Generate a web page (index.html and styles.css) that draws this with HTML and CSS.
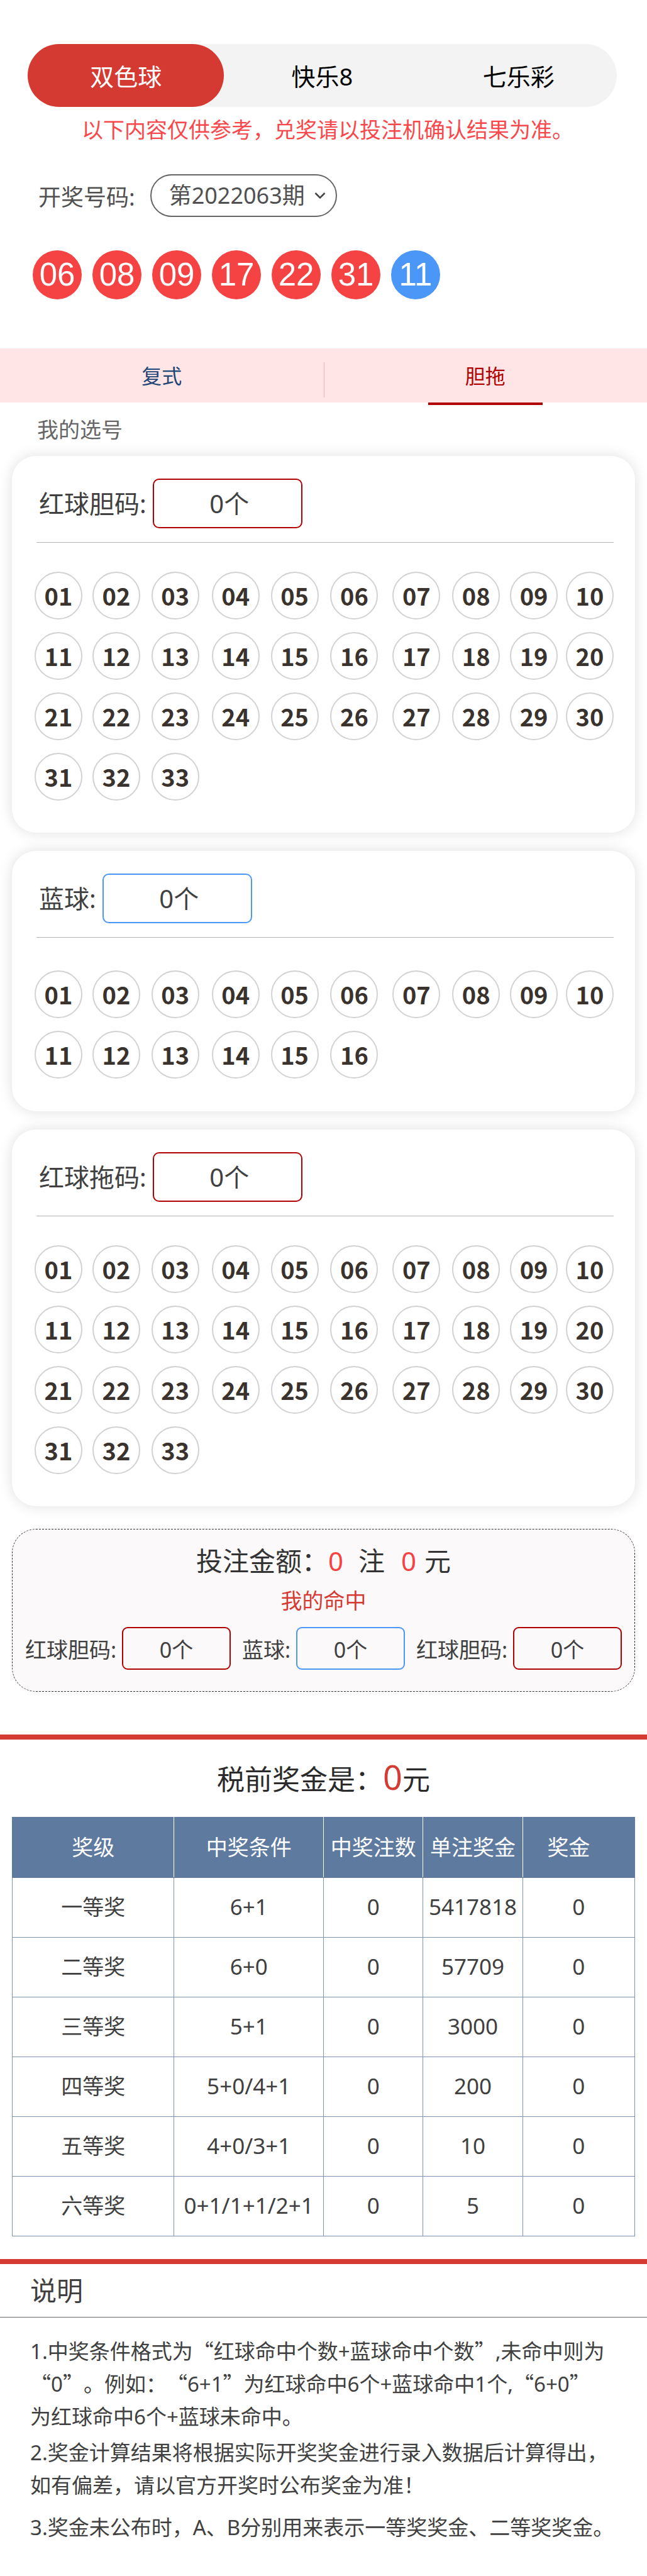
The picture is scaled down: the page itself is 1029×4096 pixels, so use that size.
FILE: index.html
```
<!DOCTYPE html>
<html lang="zh-CN">
<head>
<meta charset="utf-8">
<meta name="viewport" content="width=device-width, initial-scale=1">
<title>双色球 胆拖</title>
<link rel="stylesheet" href="styles.css">
</head>
<body>
<header class="top">
  <nav class="games">
    <button class="game game-active" type="button">双色球</button>
    <button class="game" type="button">快乐8</button>
    <button class="game" type="button">七乐彩</button>
  </nav>
  <p class="notice">以下内容仅供参考，兑奖请以投注机确认结果为准。</p>
  <div class="draw">
    <label for="issue">开奖号码:</label>
    <div class="issue">
      <select id="issue"><option>第2022063期</option></select>
      <svg class="chevron" viewBox="0 0 18 12" aria-hidden="true"><path d="M1.500 2 9 9.500 16.500 2" fill="none" stroke="#444" stroke-width="2.500"/></svg>
    </div>
  </div>
  <div class="result">
    <span class="ball">06</span><span class="ball">08</span><span class="ball">09</span><span class="ball">17</span><span class="ball">22</span><span class="ball">31</span><span class="ball ball-blue">11</span>
  </div>
</header>

<nav class="modes">
  <button class="mode" type="button">复式</button>
  <button class="mode mode-active" type="button">胆拖</button>
</nav>

<main>
  <h2 class="picks-title">我的选号</h2>
  <div class="cards">
    <section class="card">
      <div class="card-head">
        <label for="dan">红球胆码:</label>
        <input class="count" id="dan" type="text" value="0个" readonly>
      </div>
      <div class="numbers">
        <button type="button">01</button><button type="button">02</button><button type="button">03</button><button type="button">04</button><button type="button">05</button><button type="button">06</button><button type="button">07</button><button type="button">08</button><button type="button">09</button><button type="button">10</button>
        <button type="button">11</button><button type="button">12</button><button type="button">13</button><button type="button">14</button><button type="button">15</button><button type="button">16</button><button type="button">17</button><button type="button">18</button><button type="button">19</button><button type="button">20</button>
        <button type="button">21</button><button type="button">22</button><button type="button">23</button><button type="button">24</button><button type="button">25</button><button type="button">26</button><button type="button">27</button><button type="button">28</button><button type="button">29</button><button type="button">30</button>
        <button type="button">31</button><button type="button">32</button><button type="button">33</button>
      </div>
    </section>

    <section class="card card-blue">
      <div class="card-head">
        <label for="blue">蓝球:</label>
        <input class="count count-blue" id="blue" type="text" value="0个" readonly>
      </div>
      <div class="numbers">
        <button type="button">01</button><button type="button">02</button><button type="button">03</button><button type="button">04</button><button type="button">05</button><button type="button">06</button><button type="button">07</button><button type="button">08</button><button type="button">09</button><button type="button">10</button>
        <button type="button">11</button><button type="button">12</button><button type="button">13</button><button type="button">14</button><button type="button">15</button><button type="button">16</button>
      </div>
    </section>

    <section class="card">
      <div class="card-head">
        <label for="tuo">红球拖码:</label>
        <input class="count" id="tuo" type="text" value="0个" readonly>
      </div>
      <div class="numbers">
        <button type="button">01</button><button type="button">02</button><button type="button">03</button><button type="button">04</button><button type="button">05</button><button type="button">06</button><button type="button">07</button><button type="button">08</button><button type="button">09</button><button type="button">10</button>
        <button type="button">11</button><button type="button">12</button><button type="button">13</button><button type="button">14</button><button type="button">15</button><button type="button">16</button><button type="button">17</button><button type="button">18</button><button type="button">19</button><button type="button">20</button>
        <button type="button">21</button><button type="button">22</button><button type="button">23</button><button type="button">24</button><button type="button">25</button><button type="button">26</button><button type="button">27</button><button type="button">28</button><button type="button">29</button><button type="button">30</button>
        <button type="button">31</button><button type="button">32</button><button type="button">33</button>
      </div>
    </section>
  </div>

  <section class="summary">
    <p class="stake">投注金额：<b class="stake-count">0</b>注<b class="stake-sum">0</b>元</p>
    <h3 class="hits-title">我的命中</h3>
    <div class="hits">
      <label for="hit-dan">红球胆码:</label>
      <input class="hit" id="hit-dan" type="text" value="0个" readonly>
      <label for="hit-blue">蓝球:</label>
      <input class="hit hit-blue" id="hit-blue" type="text" value="0个" readonly>
      <label for="hit-tuo">红球胆码:</label>
      <input class="hit" id="hit-tuo" type="text" value="0个" readonly>
    </div>
  </section>

  <section class="prize">
    <h2 class="prize-title">税前奖金是：<b>0</b>元</h2>
    <table class="prize-table">
      <colgroup><col class="col-level"><col class="col-rule"><col class="col-bets"><col class="col-unit"><col class="col-total"></colgroup>
      <thead>
        <tr><th>奖级</th><th>中奖条件</th><th>中奖注数</th><th>单注奖金</th><th class="total-head">奖金</th></tr>
      </thead>
      <tbody>
        <tr><th>一等奖</th><td>6+1</td><td>0</td><td>5417818</td><td>0</td></tr>
        <tr><th>二等奖</th><td>6+0</td><td>0</td><td>57709</td><td>0</td></tr>
        <tr><th>三等奖</th><td>5+1</td><td>0</td><td>3000</td><td>0</td></tr>
        <tr><th>四等奖</th><td>5+0/4+1</td><td>0</td><td>200</td><td>0</td></tr>
        <tr><th>五等奖</th><td>4+0/3+1</td><td>0</td><td>10</td><td>0</td></tr>
        <tr><th>六等奖</th><td>0+1/1+1/2+1</td><td>0</td><td>5</td><td>0</td></tr>
      </tbody>
    </table>
  </section>

  <section class="help">
    <h2 class="help-title">说明</h2>
    <div class="help-text">
      <p>1.中奖条件格式为<q>红球命中个数+蓝球命中个数</q>,未命中则为<br><q>0</q>。例如：<q>6+1</q>为红球命中6个+蓝球命中1个,<q>6+0</q><br>为红球命中6个+蓝球未命中。</p>
      <p>2.奖金计算结果将根据实际开奖奖金进行录入数据后计算得出，<br>如有偏差，请以官方开奖时公布奖金为准！</p>
      <p class="help-last">3.奖金未公布时，A、B分别用来表示一等奖奖金、二等奖奖金。</p>
    </div>
  </section>
</main>
</body>
</html>
```
FILE: styles.css
```
* {
  box-sizing: border-box;
}

body {
  margin: 0;
  background: #fff;
  color: #404040;
  font-family: "Noto Sans", "Noto Sans CJK SC", sans-serif;
  text-spacing-trim: space-all;
}

h2, h3, p {
  margin: 0;
  font-weight: 400;
}

button, input, select {
  margin: 0;
  padding: 0;
  border: 0;
  background: none;
  color: inherit;
  font: inherit;
}

/* Game switch and latest draw */
.top {
  padding: 70px 48px 78px 44px;
}

.games {
  display: grid;
  grid-template-columns: repeat(3, 1fr);
  height: 100px;
  border-radius: 50px;
  background: #f3f3f3;
}

.game {
  padding-bottom: 2px;
  border-radius: 50px;
  color: #000;
  font-size: 38px;
}

.game-active {
  background: #d43a32;
  color: #fff;
}

.notice {
  margin-top: 12px;
  padding-left: 86px;
  color: #f9484c;
  font-size: 34px;
  line-height: 48px;
  white-space: nowrap;
}

.draw {
  display: flex;
  align-items: center;
  gap: 24px;
  margin-top: 47px;
  padding-left: 17px;
  color: #505050;
  font-size: 36px;
}

.issue {
  display: grid;
  grid-template-columns: 1fr 36px;
  align-items: center;
  width: 297px;
  height: 68px;
}

.issue select {
  grid-area: 1 / 1 / 2 / 3;
  height: 68px;
  padding: 0 0 2px 28px;
  border: 2px solid #666;
  border-radius: 34px;
  appearance: none;
}

.chevron {
  grid-area: 1 / 2 / 2 / 3;
  width: 18px;
  height: 12px;
  pointer-events: none;
}

.result {
  display: flex;
  gap: 17px;
  margin-top: 53px;
  padding-left: 8px;
}

.ball {
  width: 78px;
  height: 78px;
  border-radius: 50%;
  background: #f54343;
  color: #fff;
  font-family: "Liberation Sans", Arial, sans-serif;
  font-size: 51px;
  line-height: 78px;
  text-align: center;
}

.ball-blue {
  background: #4a97f8;
}

/* Play mode */
.modes {
  display: grid;
  grid-template-columns: 1fr 1fr;
  height: 86px;
  background: #ffe5e5;
}

.mode {
  position: relative;
  padding-bottom: 2px;
  color: #1f4575;
  font-size: 32px;
}

.mode-active {
  color: #b00000;
}

.mode-active::before {
  content: "";
  position: absolute;
  top: 22px;
  left: 0;
  width: 1px;
  height: 56px;
  background: #faa;
}

.mode-active::after {
  content: "";
  position: absolute;
  top: 100%;
  left: 50%;
  width: 182px;
  height: 4px;
  margin-left: -91px;
  background: #b00000;
}

/* Number cards */
.picks-title {
  padding: 19px 59px 18px;
  color: #666;
  font-size: 34px;
  line-height: 48px;
}

.cards {
  display: grid;
  gap: 29px;
  padding: 0 19px;
}

.card {
  padding: 36px 34px 51px 36px;
  border-radius: 38px;
  background: #fff;
  box-shadow: 0 0 22px rgba(0, 0, 0, 0.13);
}

.card-head {
  display: flex;
  align-items: center;
  gap: 10px;
  margin-left: 3px;
  padding: 0 0 22px 4px;
  border-bottom: 1px solid #b5b5b5;
  font-size: 40px;
}

.card-head label {
  padding-bottom: 3px;
}

.count {
  width: 238px;
  height: 79px;
  padding: 0 0 3px 6px;
  border: 2px solid #b00000;
  border-radius: 10px;
  text-align: center;
}

.count-blue {
  border-color: #4a97f8;
}

.numbers {
  display: grid;
  grid-template-columns: 92fr 94fr 96fr 94fr 95fr 99fr 95fr 92fr 89fr 76px;
  row-gap: 20px;
  padding-top: 46px;
}

.numbers button {
  width: 76px;
  height: 76px;
  border: 2px solid #d2d2d2;
  border-radius: 50%;
  color: #3a322c;
  font-family: "Noto Sans CJK SC", sans-serif;
  font-size: 38px;
  font-weight: 700;
  line-height: 72px;
}

.card-blue {
  padding-bottom: 52px;
}

.card-blue .numbers {
  padding-top: 52px;
}

/* Stake and hits */
.summary {
  margin: 36px 19px 68px;
  padding: 20px 20px 34px;
  border: 1px dashed #333;
  border-radius: 38px;
  background: #fbf9fa;
}

.stake {
  color: #333;
  font-size: 42px;
  line-height: 60px;
  text-align: center;
}

.stake b {
  color: #f54343;
  font-weight: 400;
}

.stake-count {
  margin-right: 24px;
}

.stake-sum {
  margin: 0 13px 0 26px;
}

.hits-title {
  margin-top: 9px;
  color: #d63b33;
  font-size: 34px;
  line-height: 48px;
  text-align: center;
}

.hits {
  display: flex;
  align-items: center;
  margin-top: 18px;
  font-size: 34px;
  white-space: nowrap;
}

.hit {
  flex: 1;
  min-width: 0;
  height: 68px;
  margin: 0 18px 0 9px;
  border: 2px solid #b00000;
  border-radius: 9px;
  text-align: center;
}

.hit:last-child {
  margin-right: 0;
}

.hit-blue {
  border-color: #4a97f8;
}

/* Prize table */
.prize {
  padding: 27px 19px 36px;
  border-top: 8px solid #d63b33;
}

.prize-title {
  margin-bottom: 24px;
  color: #2b2b2b;
  font-size: 44px;
  line-height: 72px;
  text-align: center;
}

.prize-title b {
  color: #d63b33;
  font-size: 54px;
  font-weight: 400;
  line-height: 1;
}

.prize-table {
  width: 100%;
  border-collapse: collapse;
  table-layout: fixed;
}

.col-level { width: 26%; }
.col-rule { width: 24%; }
.col-bets { width: 16%; }
.col-unit { width: 16%; }
.col-total { width: 18%; }

.prize-table th,
.prize-table td {
  height: 95px;
  padding: 0 0 2px;
  border: 1px solid #7d94b3;
  font-size: 34px;
  font-weight: 400;
  line-height: 48px;
  text-align: center;
  white-space: nowrap;
}

.prize-table td {
  font-size: 35px;
}

.prize-table thead th {
  height: 96px;
  border-color: #5f7a9f;
  background: #5f7a9f;
  color: #fff;
}

.prize-table thead th + th {
  border-left-color: #fff;
}

.prize-table thead th:not(:last-child) {
  border-right-color: #fff;
}

.prize-table .total-head {
  padding-right: 32px;
}

/* Explanation */
.help {
  border-top: 8px solid #d63b33;
}

.help-title {
  padding: 12px 48px;
  border-bottom: 1px solid #666;
  font-size: 42px;
  line-height: 60px;
}

.help-text {
  display: grid;
  gap: 5px;
  padding: 28px 48px 54px;
  font-size: 33px;
  line-height: 52px;
  white-space: nowrap;
}

.help-last {
  padding-top: 10px;
}

/* Full-width quotation marks */
q::before,
q::after {
  font-family: "Noto Sans CJK SC", sans-serif;
  line-height: 1;
}

q::before { content: "“"; }
q::after { content: "”"; }
```
